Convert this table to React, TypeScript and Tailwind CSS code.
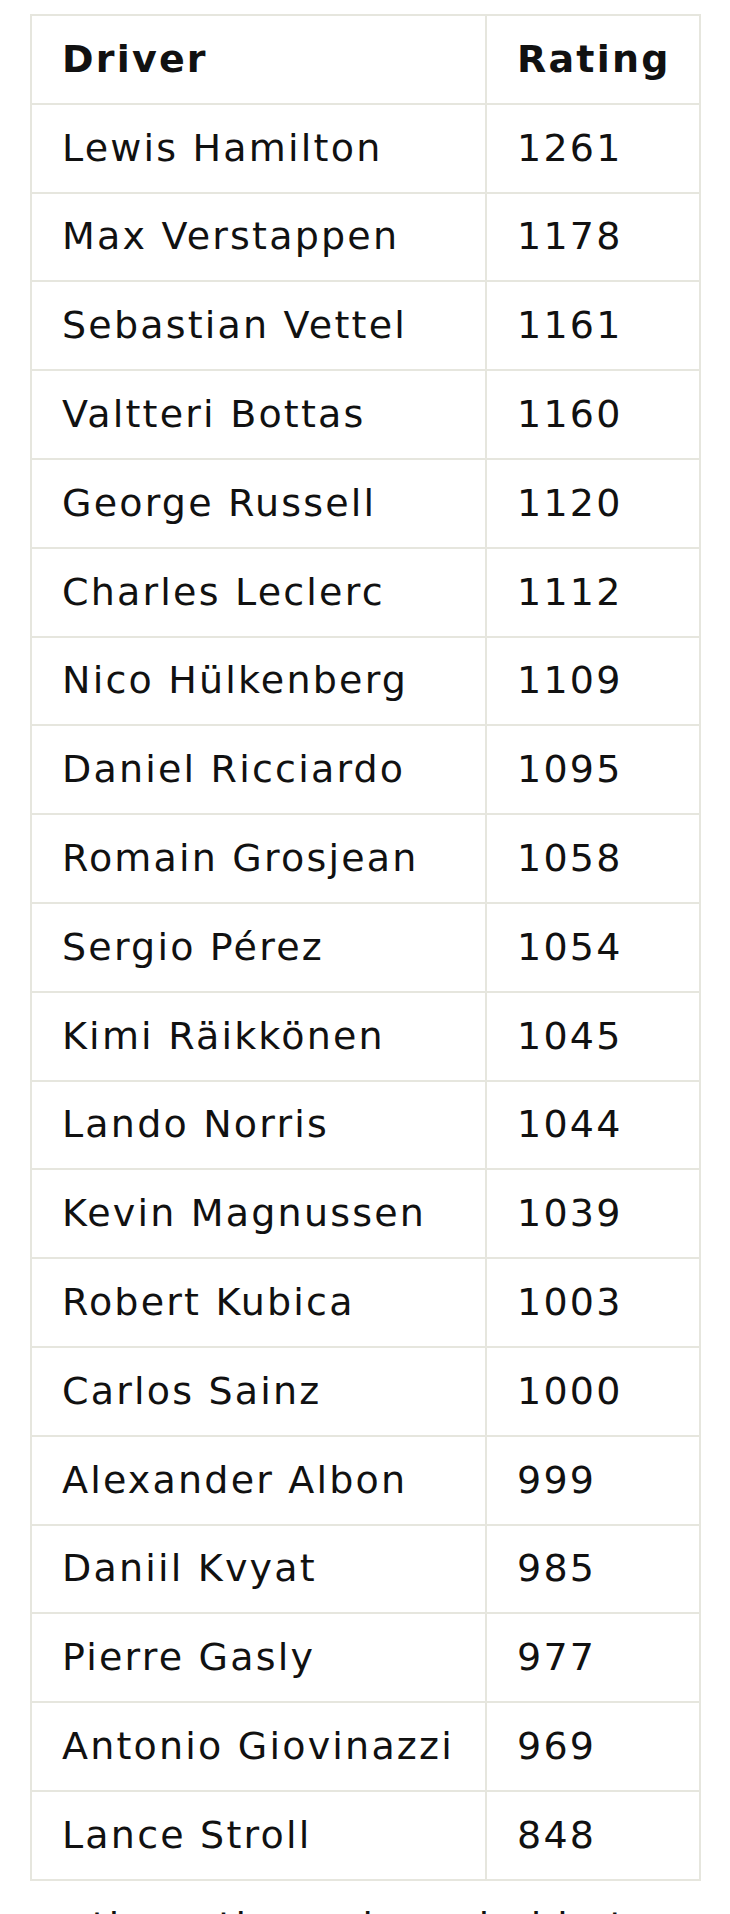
const ratings: [string, number][] = [
  ["Lewis Hamilton", 1261],
  ["Max Verstappen", 1178],
  ["Sebastian Vettel", 1161],
  ["Valtteri Bottas", 1160],
  ["George Russell", 1120],
  ["Charles Leclerc", 1112],
  ["Nico Hülkenberg", 1109],
  ["Daniel Ricciardo", 1095],
  ["Romain Grosjean", 1058],
  ["Sergio Pérez", 1054],
  ["Kimi Räikkönen", 1045],
  ["Lando Norris", 1044],
  ["Kevin Magnussen", 1039],
  ["Robert Kubica", 1003],
  ["Carlos Sainz", 1000],
  ["Alexander Albon", 999],
  ["Daniil Kvyat", 985],
  ["Pierre Gasly", 977],
  ["Antonio Giovinazzi", 969],
  ["Lance Stroll", 848],
];

const cell = "border-2 border-[#e6e6de] h-[88.8px] pl-[30px] pr-3 text-left align-middle";

export default function App() {
  return (
    <div className="min-h-screen bg-white pt-[14px] font-['DejaVu_Sans',Verdana,sans-serif] text-[38px] tracking-[2.2px] text-[#111]">
      <table className="ml-[30px] w-[671px] border-collapse">
        <thead>
          <tr>
            <th className={`${cell} w-[455px] font-bold`}>Driver</th>
            <th className={`${cell} font-bold`}>Rating</th>
          </tr>
        </thead>
        <tbody>
          {ratings.map(([driver, rating]) => (
            <tr key={driver}>
              <td className={`${cell} font-normal`}>{driver}</td>
              <td className={`${cell} font-normal`}>{rating}</td>
            </tr>
          ))}
        </tbody>
      </table>
      <p className="mx-[30px] mt-[23px] leading-[1.2]">
        as the ratings above held at the close of the season.
      </p>
    </div>
  );
}
